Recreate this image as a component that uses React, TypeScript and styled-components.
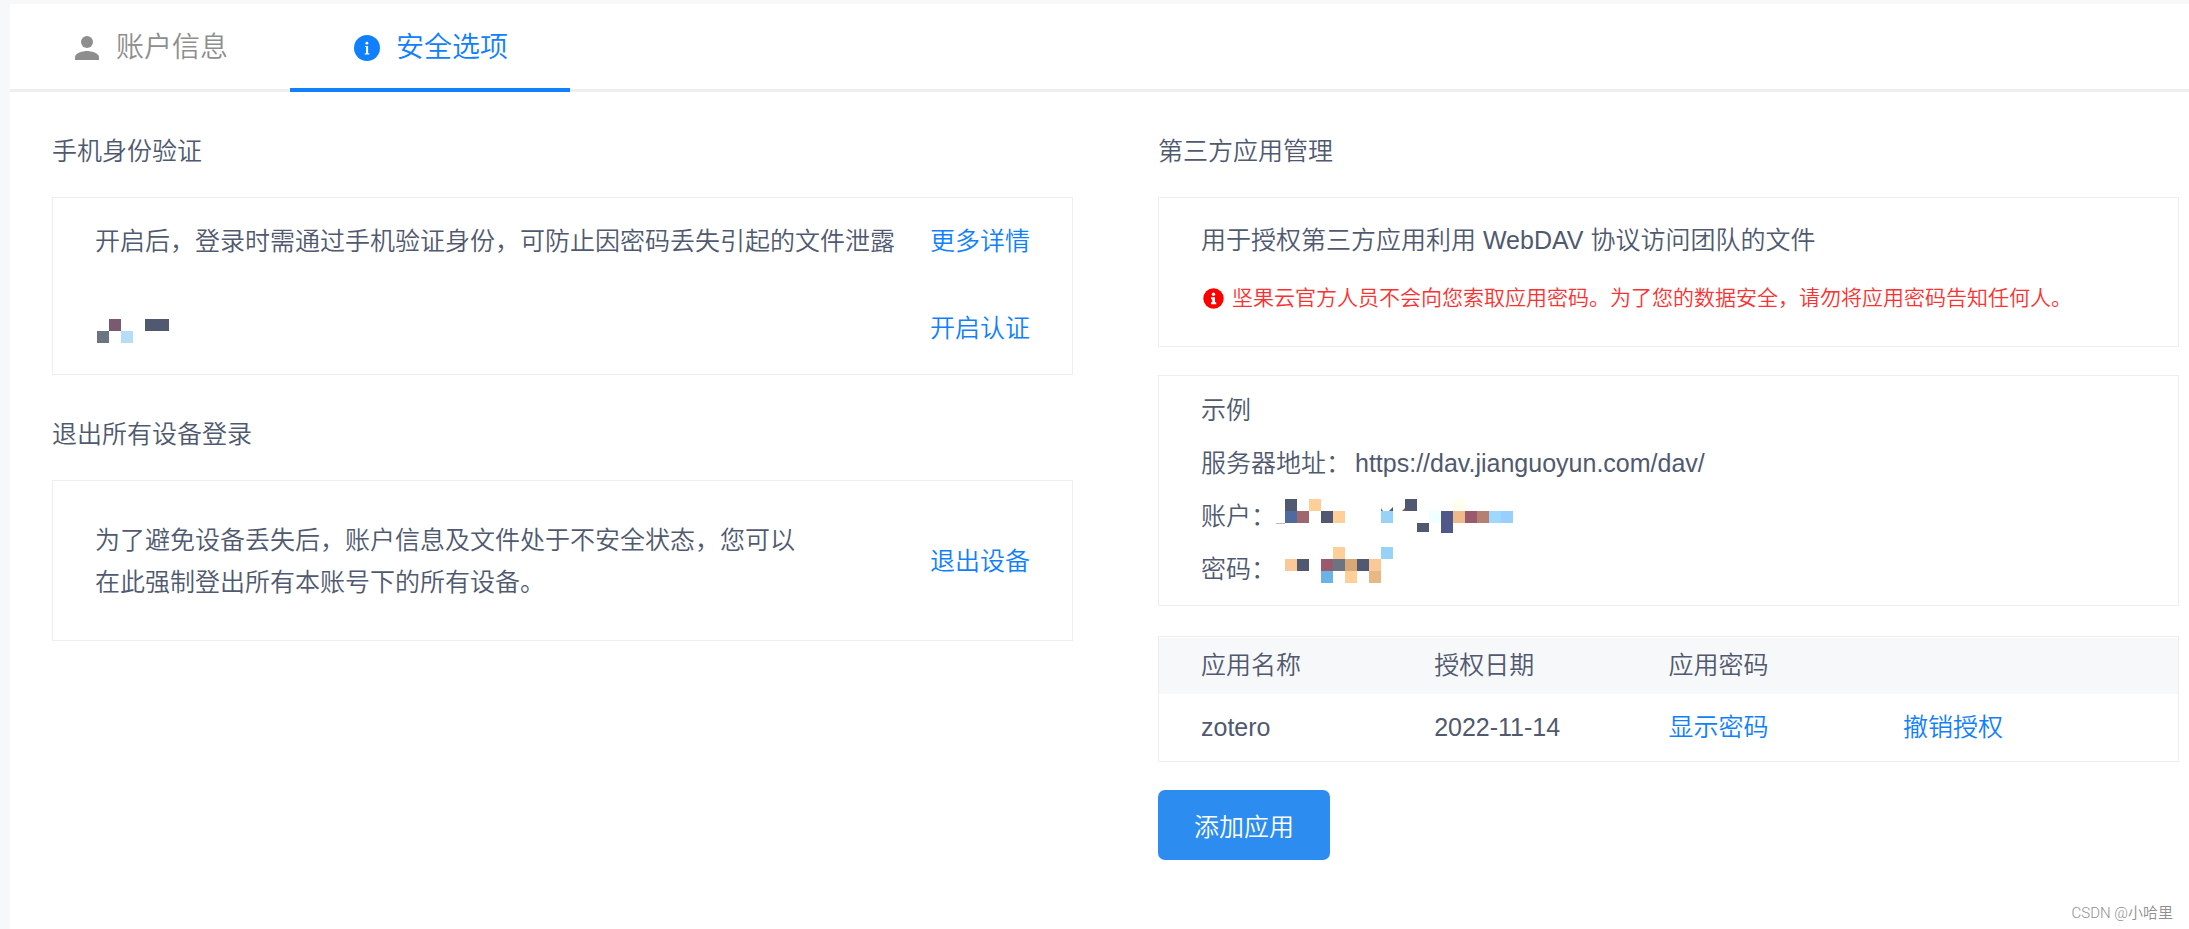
import React from "react";
import styled, { createGlobalStyle } from "styled-components";

const color = {
  page: "#f7f8fa",
  line: "#eeeeee",
  text: "#50596f",
  muted: "#8e8e8e",
  blue: "#1080ff",
  button: "#2d8cf0",
  red: "#ff3030",
};

const GlobalStyle = createGlobalStyle`
  *, *::before, *::after { box-sizing: border-box; }
  body {
    margin: 0;
    background: ${color.page};
    color: ${color.text};
    font-family: "Liberation Sans", "Noto Sans CJK SC", sans-serif;
    font-size: 25px;
    font-weight: 350;
    line-height: 42px;
  }
  h2, p, dl, dd { margin: 0; font-size: inherit; font-weight: inherit; }
  button { font: inherit; border: 0; background: none; padding: 0; cursor: pointer; }
`;

const Page = styled.div`
  position: relative;
  display: flex;
  flex-direction: column;
  min-height: 100vh;
  padding: 4px 0 0 10px;
`;

const Panel = styled.main`
  flex: 1;
  background: #fff;
`;

const TabBar = styled.nav`
  display: flex;
  height: 88px;
  box-shadow: inset 0 -3px ${color.line};
`;

const Tab = styled.button<{ $active?: boolean }>`
  display: flex;
  align-items: center;
  gap: 16px;
  width: 280px;
  padding: 4px 0 0 64px;
  border-bottom: 4px solid ${(p) => (p.$active ? color.blue : "transparent")};
  color: ${(p) => (p.$active ? color.blue : color.muted)};
  font-size: 28px;
`;

const Columns = styled.div`
  display: grid;
  grid-template-columns: 1fr 1fr;
  column-gap: 85px;
  padding: 38px 10px 69px 42px;
`;

const Column = styled.div`
  display: flex;
  flex-direction: column;
`;

const Heading = styled.h2`
  margin-bottom: 25px;
`;

const Box = styled.section`
  border: 1px solid ${color.line};
`;

const PhoneBox = styled(Box)`
  display: flex;
  flex-direction: column;
  gap: 45px;
  margin-bottom: 38px;
  padding: 22px 42px 25px;
`;

const DeviceBox = styled(Box)`
  padding: 38px 42px 37px;
`;

const Row = styled.div`
  display: flex;
  align-items: center;
  justify-content: space-between;
`;

const DeviceText = styled.p`
  max-width: 710px;
`;

const NoticeBox = styled(Box)`
  margin-bottom: 28px;
  padding: 21px 42px 27px;
`;

const Warning = styled.p`
  display: flex;
  align-items: center;
  gap: 8px;
  margin-top: 16px;
  padding-left: 2px;
  color: ${color.red};
  font-size: 21px;
`;

const ExampleBox = styled(Box)`
  margin-bottom: 30px;
  padding: 8px 42px 9px;
  line-height: 53px;
`;

const Pair = styled.div<{ $gap?: number }>`
  display: flex;
  align-items: center;
  gap: ${(p) => p.$gap ?? 0}px;
  height: 53px;

  dd { display: flex; }
`;

const Link = styled.a`
  color: ${color.blue};
  text-decoration: none;
  white-space: nowrap;
`;

const TableFrame = styled.div`
  margin-bottom: 28px;
  padding-top: 1px;
  border: 1px solid ${color.line};
`;

const Table = styled.table`
  width: 100%;
  border-collapse: collapse;
  table-layout: fixed;

  th, td { padding: 0 0 2px; font-weight: inherit; text-align: left; }
  th { height: 56px; background: ${color.page}; }
  td { height: 67px; }
  th:first-child, td:first-child { width: 27%; padding-left: 42px; }
  th:last-child { width: 27%; }
`;

const AddButton = styled.button`
  align-self: flex-start;
  height: 70px;
  padding: 4px 36px 0;
  border-radius: 7px;
  background: ${color.button};
  color: #fff;
`;

const Watermark = styled.small`
  position: absolute;
  right: 16px;
  bottom: 6px;
  color: #8f8f8f;
  font-family: Roboto, "Noto Sans CJK SC", sans-serif;
  font-size: 15px;
  line-height: 20px;
`;

const UserIcon = () => (
  <svg width="26" height="26" viewBox="0 0 26 26" fill="currentColor" aria-hidden="true">
    <circle cx="13" cy="7" r="6" />
    <path d="M1 25v-3c0-4 8-6 12-6s12 2 12 6v3z" />
  </svg>
);

const InfoIcon = () => (
  <svg width="26" height="26" viewBox="0 0 26 26" aria-hidden="true">
    <circle cx="13" cy="13" r="13" fill="currentColor" />
    <circle cx="12.900" cy="8.200" r="1.400" fill="#fff" />
    <path d="M10.900 11.300l3.200-.4v7.300l1.300.4v.8h-4.700v-.8l1.300-.4v-6.100l-1.100-.2z" fill="#fff" />
  </svg>
);

const WarnIcon = () => (
  <svg width="21" height="21" viewBox="0 0 21 21" aria-hidden="true">
    <circle cx="10.5" cy="10.5" r="10.2" fill="#f00" />
    <circle cx="10.5" cy="6.2" r="1.7" fill="#fff" />
    <path d="M8 9.2h4v5h1.2v2H8v-2h1.2v-3H8z" fill="#fff" />
  </svg>
);

const CELL = 12;
type Cell = [col: number, row: number, fill: string, w?: number, h?: number];

interface MosaicProps {
  cells: Cell[];
  left: number;
  top?: number;
  width: number;
  height: number;
  children?: React.ReactNode;
}

const Mosaic = ({ cells, left, top = 0, width, height, children }: MosaicProps) => (
  <svg width={width} height={height} viewBox={`${-left} ${-top} ${width} ${height}`} aria-hidden="true">
    {cells.map(([c, r, fill, w = CELL, h = CELL]) => (
      <rect key={`${c}-${r}`} x={c * CELL} y={r * CELL} width={w} height={h} fill={fill} />
    ))}
    {children}
  </svg>
);

const phoneCells: Cell[] = [
  [1, 0, "#7b5a70"], [0, 1, "#6c7480"], [2, 1, "#b5ddf7"], [4, 0, "#50596f", 24],
];

const accountCells: Cell[] = [
  [0, 0, "#50596f"], [2, 0, "#fecf99"], [10, 0, "#50596f"], [14, 0, "#fffff0"],
  [0, 1, "#4f6a9d"], [1, 1, "#a0666e"], [3, 1, "#50596f"], [4, 1, "#fecf99"],
  [8, 1, "#98d2f6"], [12, 1, "#f0ffff"], [13, 1, "#50588a", 12, 22], [14, 1, "#efb98a"],
  [15, 1, "#995a70"], [16, 1, "#b5806f"], [17, 1, "#9dd9ff"], [18, 1, "#98cfff"],
  [11, 2, "#50596f", 12, 9],
];

const passwordCells: Cell[] = [
  [4, 0, "#fecf99"], [8, 0, "#98d2f6"],
  [0, 1, "#fac899"], [1, 1, "#50596f"], [3, 1, "#995a70"], [4, 1, "#6c7480"],
  [5, 1, "#d9a677"], [6, 1, "#50596f"], [7, 1, "#fac899"],
  [3, 2, "#6ab3e7"], [5, 2, "#fecf99"], [7, 2, "#e8b884"],
];

export default function App() {
  return (
    <>
      <GlobalStyle />
      <Page>
        <Panel>
          <TabBar>
            <Tab type="button"><UserIcon />账户信息</Tab>
            <Tab type="button" $active aria-current="page"><InfoIcon />安全选项</Tab>
          </TabBar>
          <Columns>
            <Column>
              <Heading>手机身份验证</Heading>
              <PhoneBox>
                <Row>
                  <p>开启后，登录时需通过手机验证身份，可防止因密码丢失引起的文件泄露</p>
                  <Link href="#details">更多详情</Link>
                </Row>
                <Row>
                  <Mosaic cells={phoneCells} left={2} top={6} width={76} height={30} />
                  <Link href="#enable">开启认证</Link>
                </Row>
              </PhoneBox>
              <Heading>退出所有设备登录</Heading>
              <DeviceBox>
                <Row>
                  <DeviceText>
                    为了避免设备丢失后，账户信息及文件处于不安全状态，您可以在此强制登出所有本账号下的所有设备。
                  </DeviceText>
                  <Link href="#logout">退出设备</Link>
                </Row>
              </DeviceBox>
            </Column>
            <Column>
              <Heading>第三方应用管理</Heading>
              <NoticeBox>
                <p>用于授权第三方应用利用 WebDAV 协议访问团队的文件</p>
                <Warning>
                  <WarnIcon />
                  坚果云官方人员不会向您索取应用密码。为了您的数据安全，请勿将应用密码告知任何人。
                </Warning>
              </NoticeBox>
              <ExampleBox>
                <p>示例</p>
                <dl>
                  <Pair $gap={4}><dt>服务器地址：</dt><dd>https://dav.jianguoyun.com/dav/</dd></Pair>
                  <Pair>
                    <dt>账户：</dt>
                    <dd>
                      <Mosaic cells={accountCells} left={9} width={240} height={36}>
                        <path d="M-9 24.500h9" stroke="#b9bcc4" />
                        <path d="M96 9l2 3h-2z" fill="#3a78a8" />
                        <path d="M104 12l4-4v4z" fill="#50596f" />
                        <path d="M117 12l3-3v3z" fill="#8a5a3c" />
                      </Mosaic>
                    </dd>
                  </Pair>
                  <Pair>
                    <dt>密码：</dt>
                    <dd><Mosaic cells={passwordCells} left={9} width={240} height={46} /></dd>
                  </Pair>
                </dl>
              </ExampleBox>
              <TableFrame>
                <Table>
                  <thead>
                    <tr>
                      <th scope="col">应用名称</th>
                      <th scope="col">授权日期</th>
                      <th scope="col">应用密码</th>
                      <th scope="col" aria-label="操作" />
                    </tr>
                  </thead>
                  <tbody>
                    <tr>
                      <td>zotero</td>
                      <td>2022-11-14</td>
                      <td><Link href="#show">显示密码</Link></td>
                      <td><Link href="#revoke">撤销授权</Link></td>
                    </tr>
                  </tbody>
                </Table>
              </TableFrame>
              <AddButton type="button">添加应用</AddButton>
            </Column>
          </Columns>
        </Panel>
        <Watermark>CSDN @小哈里</Watermark>
      </Page>
    </>
  );
}
